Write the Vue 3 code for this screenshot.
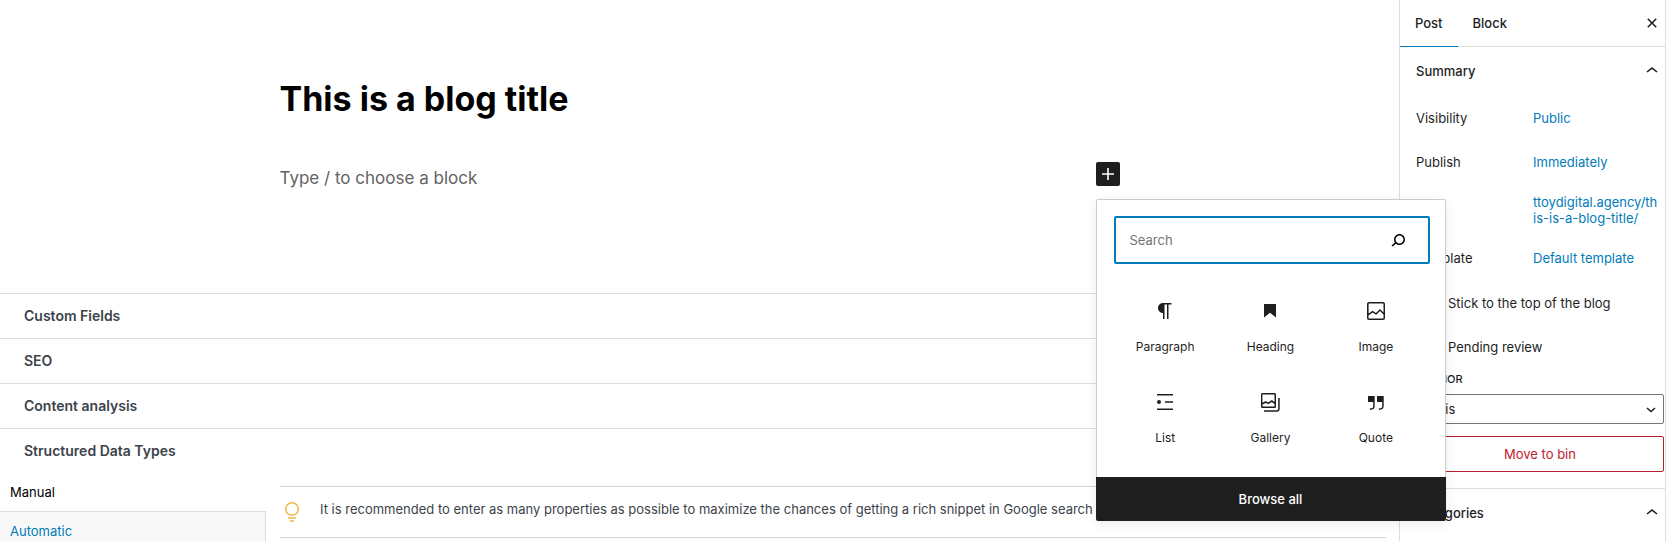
<script setup>
import { ref } from 'vue'

const search = ref('')
const sticky = ref(false)
const pending = ref(false)
const author = ref('Chris')

const panels = ['Custom Fields', 'SEO', 'Content analysis', 'Structured Data Types']

const blocks = [
  {
    name: 'Paragraph',
    path: 'm9.996 14v-.225l.004 0v6.225h1.5v-14.5h2.5v14.5h1.5v-14.5h3v-1.5h-8.504c-2.761 0-5 2.239-5 5 0 2.761 2.239 5 5 5z'
  },
  { name: 'Heading', path: 'M6 5V18.591L12 13.847L18 18.591V5H6Z' },
  {
    name: 'Image',
    path: 'M19 3H5c-1.1 0-2 .9-2 2v14c0 1.1.9 2 2 2h14c1.1 0 2-.9 2-2V5c0-1.1-.9-2-2-2zM5 4.5h14c.3 0 .5.2.5.5v8.4l-3-2.9c-.3-.3-.8-.3-1 0L11.9 14 9 12c-.3-.2-.6-.2-.8 0l-3.6 2.6V5c-.1-.3.1-.5.4-.5zm14 15H5c-.3 0-.5-.2-.5-.5v-2.4l4.1-3 3 1.9c.3.2.7.2.9-.1L16 12l3.5 3.4V19c0 .3-.2.5-.5.5z'
  },
  {
    name: 'List',
    path: 'M4 4h16v1.5H4zM12 11.2h8v1.5h-8zM4 18.5h16V20H4zM6 10a2 2 0 1 0 0 4 2 2 0 0 0 0-4z'
  },
  {
    name: 'Gallery',
    path: 'M20.2 8v11c0 .7-.6 1.2-1.2 1.2H6v1.5h13c1.5 0 2.7-1.2 2.7-2.8V8zM18 16.4V4.6c0-.9-.7-1.6-1.6-1.6H4.6C3.7 3 3 3.7 3 4.6v11.8c0 .9.7 1.6 1.6 1.6h11.8c.9 0 1.6-.7 1.6-1.6zM4.5 4.6c0-.1.1-.1.1-.1h11.8c.1 0 .1.1.1.1V12l-2.3-1.7c-.3-.2-.6-.2-.9 0l-2.9 2.1L8 11.3c-.2-.1-.5-.1-.7 0l-2.9 1.5V4.6zm0 11.8v-1.8l3.2-1.7 2.4 1.2c.2.1.5.1.8-.1l2.8-2 2.8 2v2.5c0 .1-.1.1-.1.1H4.6c0-.1-.1-.2-.1-.2z'
  },
  {
    name: 'Quote',
    path: 'M13 6v6h5.2v4c0 .8-.2 1.4-.5 1.7-.6.6-1.6.6-2.5.5h-.3v1.5h.5c1 0 2.3-.1 3.3-1 .6-.6 1-1.6 1-2.8V6H13zm-9 6h5.2v4c0 .8-.2 1.4-.5 1.7-.6.6-1.6.6-2.5.5h-.3v1.5h.5c1 0 2.3-.1 3.3-1 .6-.6 1-1.6 1-2.8V6H4v6z'
  }
]

const summary = [
  { label: 'Visibility', value: 'Public' },
  { label: 'Publish', value: 'Immediately' },
  { label: 'URL', value: 'ttoydigital.agency/this-is-a-blog-title/', tall: true },
  { label: 'Template', value: 'Default template' }
]
</script>

<template>
  <div class="editor">
    <main class="main">
      <section class="canvas">
        <h1 class="title">This is a blog title</h1>
        <div class="prompt-row">
          <p class="prompt">Type / to choose a block</p>
          <div class="inserter">
            <button class="add" type="button" aria-label="Add block">
              <svg viewBox="0 0 24 24"><path d="M18 11.2h-5.2V6h-1.6v5.2H6v1.6h5.2V18h1.6v-5.2H18z" /></svg>
            </button>
            <div class="popover">
              <div class="popover-body">
                <div class="search">
                  <input v-model="search" type="text" placeholder="Search" aria-label="Search" />
                  <svg viewBox="0 0 24 24">
                    <path d="M13.5 6C10.5 6 8 8.5 8 11.5c0 1.1.3 2.1.9 3l-3.4 3 1 1.1 3.4-2.9c1 .9 2.2 1.4 3.6 1.4 3 0 5.5-2.5 5.5-5.5C19 8.5 16.5 6 13.5 6zm0 9.5c-2.2 0-4-1.8-4-4s1.8-4 4-4 4 1.8 4 4-1.8 4-4 4z" />
                  </svg>
                </div>
                <div class="blocks">
                  <button v-for="b in blocks" :key="b.name" class="block" type="button">
                    <svg viewBox="0 0 24 24"><path :d="b.path" /></svg>
                    <span>{{ b.name }}</span>
                  </button>
                </div>
              </div>
              <button class="browse" type="button">Browse all</button>
            </div>
          </div>
        </div>
      </section>

      <section class="panels">
        <h2 v-for="p in panels" :key="p" class="panel">{{ p }}</h2>
        <div class="structured">
          <nav class="modes">
            <a class="mode active" href="#manual">Manual</a>
            <a class="mode" href="#automatic">Automatic</a>
          </nav>
          <div class="tip">
            <svg class="bulb" viewBox="0 0 16 22">
              <circle cx="8" cy="8" r="6.3" />
              <path d="M4 17h8M6 20h4" />
            </svg>
            <p>It is recommended to enter as many properties as possible to maximize the chances of getting a rich snippet in Google search results.</p>
          </div>
        </div>
      </section>
    </main>

    <aside class="sidebar">
      <div class="tabs">
        <button class="tab selected" type="button">Post</button>
        <button class="tab" type="button">Block</button>
        <button class="close" type="button" aria-label="Close settings">
          <svg viewBox="0 0 24 24">
            <path d="M12 13.06l3.712 3.713 1.061-1.06L13.061 12l3.712-3.712-1.06-1.06L12 10.938 8.288 7.227l-1.061 1.06L10.939 12l-3.712 3.712 1.06 1.061L12 13.061z" />
          </svg>
        </button>
      </div>

      <button class="section-head" type="button">
        <span>Summary</span>
        <svg viewBox="0 0 24 24"><path d="M6.5 12.4L12 8l5.5 4.4-.9 1.2L12 10l-4.5 3.6-1-1.2z" /></svg>
      </button>
      <div class="summary">
        <div v-for="row in summary" :key="row.label" class="row" :class="{ tall: row.tall }">
          <span class="label">{{ row.label }}</span>
          <a class="value" href="#">{{ row.value }}</a>
        </div>
        <label class="check"><input v-model="sticky" type="checkbox" />Stick to the top of the blog</label>
        <label class="check"><input v-model="pending" type="checkbox" />Pending review</label>
        <label class="author-label" for="author">AUTHOR</label>
        <div class="select">
          <select id="author" v-model="author">
            <option>Chris</option>
          </select>
          <svg viewBox="0 0 10 6"><path d="M1 1l4 3.6L9 1" /></svg>
        </div>
        <button class="bin" type="button">Move to bin</button>
      </div>
      <button class="section-head categories" type="button">
        <span>Categories</span>
        <svg viewBox="0 0 24 24"><path d="M6.5 12.4L12 8l5.5 4.4-.9 1.2L12 10l-4.5 3.6-1-1.2z" /></svg>
      </button>
    </aside>
  </div>
</template>

<style>
body {
  margin: 0;
  background: #fff;
}
</style>

<style scoped>
* {
  box-sizing: border-box;
}
.editor {
  display: grid;
  grid-template-columns: minmax(0, 1fr) 267px;
  height: 100vh;
  padding-right: 3px;
  overflow: hidden;
  background: #fdfdfd;
  color: #1e1e1e;
  font-family: Inter, "Liberation Sans", sans-serif;
  font-size: 13px;
  line-height: 16px;
}
h1,
h2,
p {
  margin: 0;
}
button,
input,
select {
  font: inherit;
  color: inherit;
}
button {
  padding: 0;
  border: 0;
  background: none;
}
a {
  color: #007cba;
  text-decoration: none;
}
svg {
  display: block;
  width: 24px;
  height: 24px;
  flex: none;
  fill: currentColor;
}
.main {
  background: #fff;
}
.canvas {
  height: 293px;
  max-width: 840px;
  margin: 0 auto;
  padding-top: 76px;
}
.title {
  color: #000;
  font-size: 34px;
  font-weight: 700;
  line-height: 46px;
}
.prompt-row {
  display: flex;
  justify-content: space-between;
  margin-top: 40px;
}
.prompt {
  padding-top: 2px;
  color: #626262;
  font-size: 17px;
  line-height: 28px;
}
.inserter {
  position: relative;
}
.add {
  display: block;
  border-radius: 2px;
  background: #1e1e1e;
  color: #fff;
}
.popover {
  position: absolute;
  z-index: 2;
  top: 37px;
  left: 0;
  width: 350px;
  border-radius: 2px;
  background: #fff;
  box-shadow: 0 3px 12px rgba(0, 0, 0, 0.08);
}
.popover-body {
  padding: 16px 15px 16px 17px;
  border: 1px solid #ccc;
  border-bottom: 0;
  border-radius: 2px 2px 0 0;
}
.search {
  display: flex;
  align-items: center;
  height: 48px;
  padding: 0 18px 0 14px;
  border: 2px solid #007cba;
  border-radius: 2px;
}
.search input {
  flex: 1;
  min-width: 0;
  padding: 0;
  border: 0;
  outline: 0;
  background: none;
}
.search input::placeholder {
  color: #757575;
  opacity: 1;
}
.search svg {
  color: #000;
}
.blocks {
  display: grid;
  grid-template-columns: repeat(3, 1fr);
  margin: 15px 1px 0 -1px;
}
.block {
  display: flex;
  flex-direction: column;
  align-items: center;
  gap: 16px;
  height: 91px;
  padding-top: 20px;
  font-size: 12px;
}
.browse {
  display: block;
  width: 100%;
  height: 44px;
  border-radius: 0 0 2px 2px;
  background: #1e1e1e;
  color: #fff;
  font-weight: 500;
}
.panel {
  height: 45px;
  padding: 0 24px;
  border-top: 1px solid #ddd;
  color: #3c434a;
  font-size: 14px;
  font-weight: 600;
  line-height: 44px;
}
.structured {
  display: flex;
  gap: 14px;
  padding-right: 13px;
}
.modes {
  width: 266px;
  flex: none;
}
.mode {
  display: block;
  height: 40px;
  padding: 11px 10px;
  border: solid #ddd;
  border-width: 1px 1px 1px 0;
  background: #f8f8f8;
}
.mode.active {
  height: 38px;
  border: 0;
  background: none;
  color: #000;
}
.tip {
  display: flex;
  flex: 1;
  align-items: flex-start;
  gap: 20px;
  height: 52px;
  margin-top: 13px;
  padding: 14px 4px;
  border: solid #d4d4d4;
  border-width: 1px 0;
  color: #3c434a;
}
.tip p {
  white-space: nowrap;
}
.bulb {
  width: 16px;
  height: 22px;
  fill: none;
  stroke: #efb84c;
  stroke-width: 1.5;
}
.sidebar {
  border: solid #ddd;
  border-width: 0 1px;
  background: #fff;
}
.tabs {
  display: flex;
  height: 47px;
  border-bottom: 1px solid #ddd;
}
.tab {
  height: 47px;
  padding: 0 15px;
  border-bottom: 1px solid transparent;
  font-weight: 500;
}
.tab.selected {
  border-color: #007cba;
}
.close {
  margin-left: auto;
  padding-right: 1px;
}
.section-head {
  display: flex;
  align-items: center;
  justify-content: space-between;
  width: 100%;
  height: 48px;
  padding: 0 1px 0 16px;
  font-weight: 500;
}
.summary {
  padding: 5px 1px 16px 16px;
}
.row {
  display: flex;
  align-items: center;
  height: 36px;
  margin-bottom: 8px;
}
.row.tall {
  height: 44px;
}
.label {
  width: 117px;
  flex: none;
}
.value {
  width: 126px;
  word-break: break-all;
}
.check {
  display: flex;
  align-items: center;
  gap: 12px;
  height: 38px;
  margin-bottom: 6px;
}
.check input {
  width: 20px;
  height: 20px;
  margin: 0;
}
.author-label {
  display: block;
  margin-bottom: 8px;
  font-size: 11px;
  font-weight: 500;
  line-height: 14px;
}
.select {
  position: relative;
}
.select select {
  display: block;
  width: 100%;
  height: 30px;
  padding: 0 6px;
  border: 1px solid #757575;
  border-radius: 2px;
  appearance: none;
  background: #fff;
}
.select svg {
  position: absolute;
  top: 13px;
  right: 8px;
  width: 10px;
  height: 6px;
  fill: none;
  stroke: #1e1e1e;
  stroke-width: 1.5;
  pointer-events: none;
}
.bin {
  display: block;
  width: 100%;
  height: 36px;
  margin-top: 12px;
  border: 1px solid #b5202f;
  border-radius: 2px;
  color: #c0202f;
}
.categories {
  border-top: 1px solid #ddd;
}
</style>
